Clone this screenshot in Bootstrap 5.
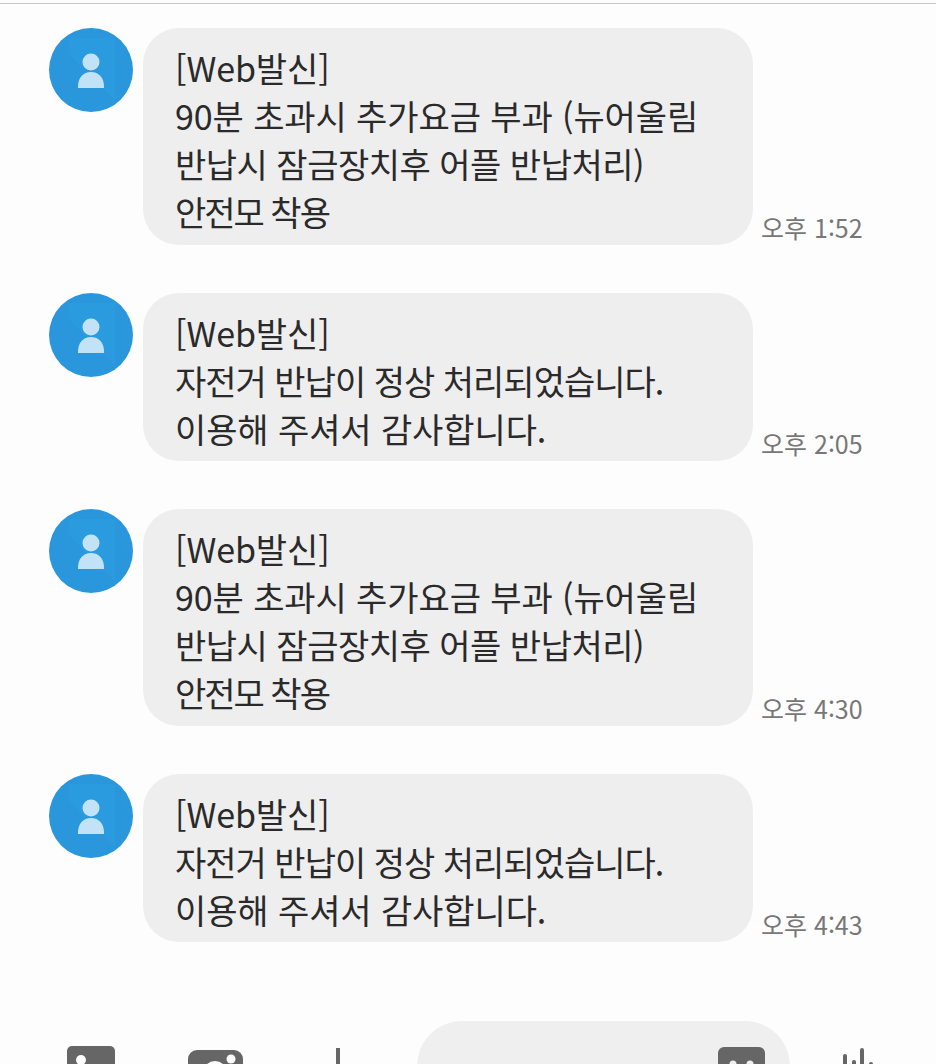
<!DOCTYPE html>
<html lang="ko">
<head>
  <meta charset="UTF-8">
  <meta name="viewport" content="width=device-width, initial-scale=1">
  <title>메시지</title>
  <link href="https://cdn.jsdelivr.net/npm/bootstrap@5.3.2/dist/css/bootstrap.min.css" rel="stylesheet">
  <style>
    html, body { height: 1064px; overflow: hidden; }
    body {
      background: #fdfdfd;
      font-family: "Noto Sans CJK KR", "Noto Sans", sans-serif;
      padding-top: 3px;
    }
    .top-rule { height: 1px; background: #c6c6c6; }
    .thread { padding: 24px 0 0 49px; gap: 48px; }
    .avatar { width: 84px; height: 84px; flex: none; }
    .bubble {
      width: 610px;
      margin-left: 10px;
      padding: 16px 20px 8.5px 32px;
      background: #eeeeee;
      border-radius: 36px;
      color: #2a2a2a;
      font-size: 34px;
      line-height: 48px;
      letter-spacing: -.1px;
      white-space: nowrap;
    }
    .tight-line { letter-spacing: -1px; }
    .snug-line { letter-spacing: -.5px; }
    .short-line { letter-spacing: -2px; }
    .stamp { margin: 0 0 0 8px; color: #777; font-size: 25px; line-height: 36px; white-space: nowrap; }
    .dock { height: 43px; margin-top: 79px; overflow: hidden; }
    .dock-icon { flex: none; }
    .dock-contact { margin: 25px 0 0 67px; }
    .dock-camera { margin: 29px 0 0 73px; }
    .dock-plus { margin: 27px 0 0 92px; }
    .dock-wave { margin: 27px 0 0 51px; }
    .composer { width: 373px; height: 90px; margin-left: 76px; background: #efefef; border-radius: 45px; flex: none; }
    .composer-emoji { top: 26px; left: 301px; }
  </style>
</head>
<body>
  <svg width="0" height="0" class="position-absolute">
    <symbol id="sender" viewBox="0 0 84 84">
      <circle cx="42" cy="42" r="42" fill="#2a96dc"/>
      <path d="M20 10h46v62L20 26z" fill="#2b9bdf"/>
      <circle cx="42" cy="34" r="8.5" fill="#c2e3f7"/>
      <path d="M29 60c-.5-10 5-16 13-16s13.500 6 13 16z" fill="#c2e3f7"/>
    </symbol>
  </svg>
  <div class="top-rule"></div>
  <main class="thread d-flex flex-column">
    <div class="d-flex align-items-start">
      <svg class="avatar"><use href="#sender"/></svg>
      <div class="bubble">[Web발신]<br>90분 초과시 추가요금 부과 (뉴어울림<br><span class="snug-line">반납시 잠금장치후 어플 반납처리)</span><br><span class="short-line">안전모 착용</span></div>
      <p class="stamp align-self-end">오후 1:52</p>
    </div>
    <div class="d-flex align-items-start">
      <svg class="avatar"><use href="#sender"/></svg>
      <div class="bubble">[Web발신]<br><span class="tight-line">자전거 반납이 정상 처리되었습니다.</span><br>이용해 주셔서 감사합니다.</div>
      <p class="stamp align-self-end">오후 2:05</p>
    </div>
    <div class="d-flex align-items-start">
      <svg class="avatar"><use href="#sender"/></svg>
      <div class="bubble">[Web발신]<br>90분 초과시 추가요금 부과 (뉴어울림<br><span class="snug-line">반납시 잠금장치후 어플 반납처리)</span><br><span class="short-line">안전모 착용</span></div>
      <p class="stamp align-self-end">오후 4:30</p>
    </div>
    <div class="d-flex align-items-start">
      <svg class="avatar"><use href="#sender"/></svg>
      <div class="bubble">[Web발신]<br><span class="tight-line">자전거 반납이 정상 처리되었습니다.</span><br>이용해 주셔서 감사합니다.</div>
      <p class="stamp align-self-end">오후 4:43</p>
    </div>
  </main>
  <footer class="dock d-flex align-items-start">
    <svg class="dock-icon dock-contact" width="48" height="48" viewBox="0 0 48 48"><rect width="48" height="48" rx="5" fill="#666"/><circle cx="14" cy="14" r="5" fill="#fdfdfd"/></svg>
    <svg class="dock-icon dock-camera" width="55" height="48" viewBox="0 0 55 48"><rect width="55" height="48" rx="9" fill="#666"/><circle cx="43" cy="9" r="4.500" fill="#fdfdfd"/><circle cx="27" cy="23" r="12" fill="#fdfdfd"/></svg>
    <svg class="dock-icon dock-plus" width="6" height="40" viewBox="0 0 6 40"><rect x="1" width="4" height="40" fill="#666"/></svg>
    <div class="composer position-relative">
      <svg class="composer-emoji position-absolute" width="47" height="47" viewBox="0 0 47 47"><rect width="47" height="47" rx="6" fill="#666"/><circle cx="15" cy="17" r="3.500" fill="#efefef"/><circle cx="32" cy="17" r="3.500" fill="#efefef"/></svg>
    </div>
    <svg class="dock-icon dock-wave" width="32" height="40" viewBox="0 0 32 40"><g fill="none" stroke="#666" stroke-width="4" stroke-linecap="round"><path d="M4 8v32M21 2v38M13 14v26M30 16v24"/></g></svg>
  </footer>
</body>
</html>
